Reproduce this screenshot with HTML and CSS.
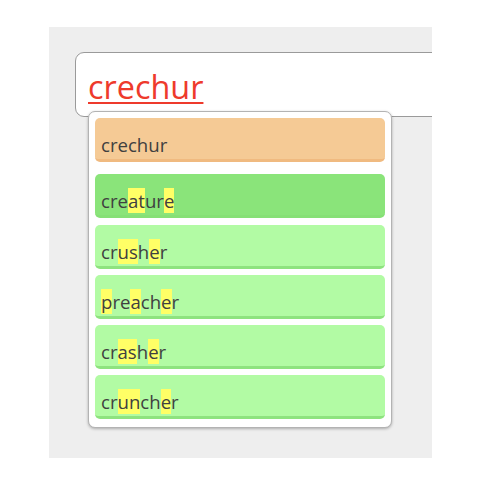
FILE: index.html
```html
<!DOCTYPE html>
<html>
<head>
<meta charset="utf-8">
<link rel="stylesheet" href="styles.css">
</head>
<body>
<div class="frame">
  <div class="input"><span class="typed">crechur</span></div>
  <div class="menu">
    <div class="item original">crechur</div>
    <div class="item best">cre<mark>at</mark>ur<mark>e</mark></div>
    <div class="item">cr<mark>us</mark>h<mark>e</mark>r</div>
    <div class="item"><mark>p</mark>re<mark>a</mark>ch<mark>e</mark>r</div>
    <div class="item">cr<mark>as</mark>h<mark>e</mark>r</div>
    <div class="item">cr<mark>un</mark>ch<mark>e</mark>r</div>
  </div>
</div>
</body>
</html>
```
FILE: styles.css
```css
html, body {
  margin: 0;
  padding: 0;
  background: #ffffff;
}
body {
  font-family: "Open Sans", "Noto Sans", sans-serif;
}
.frame {
  position: relative;
  margin: 27px 0 0 49px;
  width: 383px;
  height: 431px;
  background: #eeeeee;
  overflow: hidden;
}
.input {
  margin: 25px 0 0 26px;
  width: 420px;
  height: 65px;
  box-sizing: border-box;
  border: 1px solid #9a9a9a;
  border-radius: 9px;
  background: #ffffff;
  padding: 0 0 0 12px;
}
.typed {
  display: block;
  padding-top: 11px;
  font-size: 32.4px;
  line-height: 44px;
  color: #ee3a2c;
  text-decoration: underline;
  text-decoration-thickness: 2px;
  text-underline-offset: 3px;
}
.menu {
  position: absolute;
  left: 39px;
  top: 84px;
  width: 304px;
  height: 317px;
  box-sizing: border-box;
  background: #ffffff;
  border: 1px solid #b3b3b3;
  border-radius: 7px;
  box-shadow: 0 1px 3px rgba(0, 0, 0, 0.28);
  padding: 6px 6px 7px 6px;
  display: flex;
  flex-direction: column;
  gap: 6.3px;
}
.item {
  height: 44px;
  box-sizing: border-box;
  padding: 14px 6px 0 6px;
  border-radius: 5px;
  background: #b2fba4;
  border-bottom: 3px solid #8ee37f;
  font-size: 18.6px;
  color: #404040;
  white-space: nowrap;
}
.item.original {
  background: #f5ca95;
  border-bottom-color: #f0ba80;
  margin-bottom: 6px;
}
.item.best {
  background: #8ae47a;
  border-bottom-color: #86e076;
}
mark {
  background: #ffff66;
  color: inherit;
}
```
